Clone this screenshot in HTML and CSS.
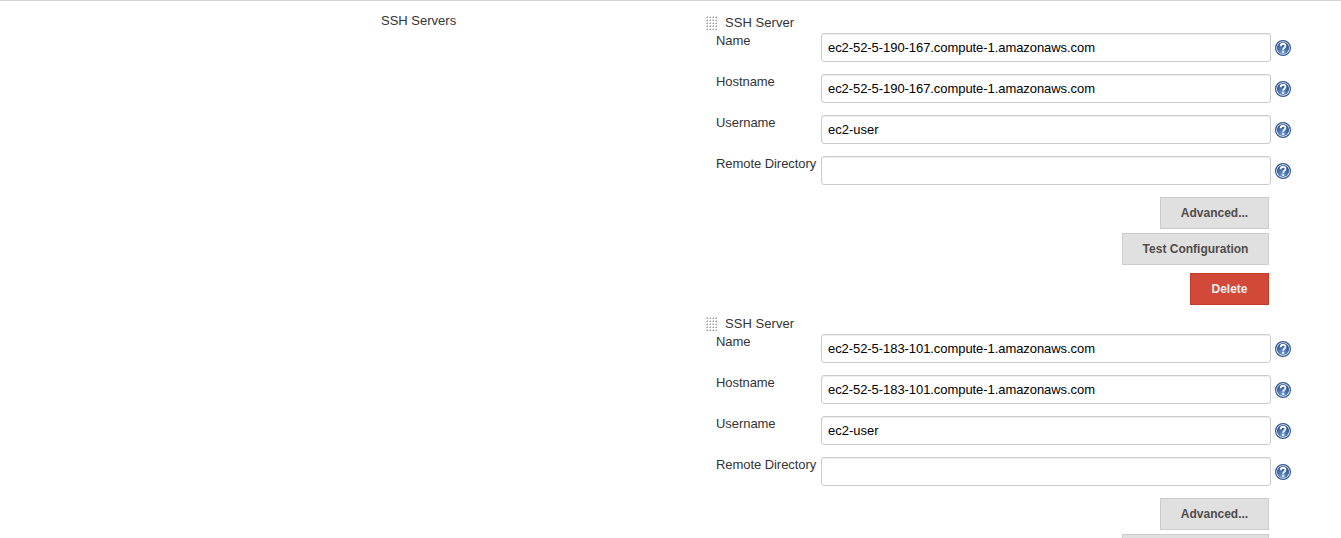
FILE: index.html
```html
<!DOCTYPE html>
<html lang="en">
<head>
<meta charset="utf-8">
<title>SSH Servers</title>
<link rel="stylesheet" href="styles.css">
</head>
<body>
<svg class="defs" width="0" height="0" aria-hidden="true">
  <defs>
    <radialGradient id="ball" cx="45%" cy="80%" r="80%">
      <stop offset="0" stop-color="#6f9bd0"/>
      <stop offset="1" stop-color="#204482"/>
    </radialGradient>
    <pattern id="dots" width="3" height="3" patternUnits="userSpaceOnUse">
      <path d="M0 1h1v1H0z" fill="#c4c4c4"/>
      <path d="M1 0h1v1H1z" fill="#c8c8c8"/>
      <path d="M1 1h1v1H1z" fill="#a4a4a4"/>
    </pattern>
    <symbol id="help" viewBox="0 0 16 16">
      <circle cx="8" cy="8" r="7.4" fill="#fff" stroke="#2d568f" stroke-width="1.2"/>
      <circle cx="8" cy="8" r="6.1" fill="url(#ball)"/>
      <path d="M5.6 6.2C5.6 3 10.5 3 10.5 5.8C10.5 7.7 8.2 7.6 8.2 9.8" fill="none" stroke="#fff" stroke-width="1.8"/>
      <path d="M7.2 10.8h2v2h-2z" fill="#fff"/>
    </symbol>
    <symbol id="grip" viewBox="0 0 12 15"><path d="M0 0h12v15H0z" fill="url(#dots)"/></symbol>
  </defs>
</svg>
<main class="config">
  <div class="section-name"><span class="t-section">SSH Servers</span></div>
  <div class="servers">
    <section class="server">
      <h2 class="title"><svg class="grip"><use href="#grip"/></svg><span class="t-title">SSH Server</span></h2>
      <div class="row"><label class="label">Name</label><div class="field"><span class="host">ec2-52-5-190-167.compute-1.amazonaws.com</span></div><svg class="help"><use href="#help"/></svg></div>
      <div class="row"><label class="label">Hostname</label><div class="field"><span class="host">ec2-52-5-190-167.compute-1.amazonaws.com</span></div><svg class="help"><use href="#help"/></svg></div>
      <div class="row"><label class="label">Username</label><div class="field"><span class="user">ec2-user</span></div><svg class="help"><use href="#help"/></svg></div>
      <div class="row"><label class="label">Remote Directory</label><div class="field"></div><svg class="help"><use href="#help"/></svg></div>
      <div class="actions">
        <button class="button advanced">Advanced...</button>
        <button class="button test">Test Configuration</button>
        <button class="button delete">Delete</button>
      </div>
    </section>
    <section class="server">
      <h2 class="title"><svg class="grip"><use href="#grip"/></svg><span class="t-title">SSH Server</span></h2>
      <div class="row"><label class="label">Name</label><div class="field"><span class="host">ec2-52-5-183-101.compute-1.amazonaws.com</span></div><svg class="help"><use href="#help"/></svg></div>
      <div class="row"><label class="label">Hostname</label><div class="field"><span class="host">ec2-52-5-183-101.compute-1.amazonaws.com</span></div><svg class="help"><use href="#help"/></svg></div>
      <div class="row"><label class="label">Username</label><div class="field"><span class="user">ec2-user</span></div><svg class="help"><use href="#help"/></svg></div>
      <div class="row"><label class="label">Remote Directory</label><div class="field"></div><svg class="help"><use href="#help"/></svg></div>
      <div class="actions">
        <button class="button advanced">Advanced...</button>
        <button class="button test"></button>
      </div>
    </section>
  </div>
</main>
</body>
</html>
```
FILE: styles.css
```css
* { box-sizing: border-box; }
body {
  margin: 0;
  height: 538px;
  overflow: hidden;
  background: #fff;
  color: #333;
  font: 13px/16px "Liberation Sans", Arial, sans-serif;
}
.defs { position: absolute; }
.config {
  display: flex;
  height: 538px;
  overflow: hidden;
  border-top: 1px solid #d3d3cf;
}
.section-name { width: 706px; flex: none; padding: 12px 0 0 381px; }
.servers { width: 585px; flex: none; padding-top: 11px; }
.server { height: 301px; }
.title {
  display: flex;
  height: 21px;
  margin: 0;
  font-size: 13px;
  font-weight: normal;
  line-height: 22px;
}
.t-title { letter-spacing: .06px; }
.grip { width: 12px; height: 15px; margin: 4px 7px 0 0; }
.row { display: flex; height: 41px; padding-left: 10px; }
.label {
  width: 105px;
  flex: none;
  white-space: nowrap;
  letter-spacing: -.06px;
  line-height: 15px;
}
.field {
  width: 450px;
  height: 29px;
  flex: none;
  padding: 0 6px;
  border: 1px solid #ccc;
  border-radius: 3px;
  box-shadow: inset 0 1px 1px rgba(0, 0, 0, .075);
  color: #000;
  line-height: 27px;
  white-space: nowrap;
}
.host { letter-spacing: -.065px; }
.help { width: 16px; height: 16px; margin: 7px 0 0 4px; }
.actions {
  display: flex;
  flex-direction: column;
  align-items: flex-end;
  gap: 4px;
  padding-right: 22px;
}
.button {
  height: 32px;
  flex: none;
  padding: 0;
  border: 1px solid #ccc;
  background: #e0e0e0;
  color: #504b4b;
  font: bold 12px/30px "Liberation Sans", Arial, sans-serif;
  white-space: nowrap;
}
.advanced { width: 109px; }
.test { width: 147px; }
.delete {
  width: 79px;
  margin-top: 4px;
  border-color: #c23b2b;
  background: #d24939;
  color: #eee;
}
```
